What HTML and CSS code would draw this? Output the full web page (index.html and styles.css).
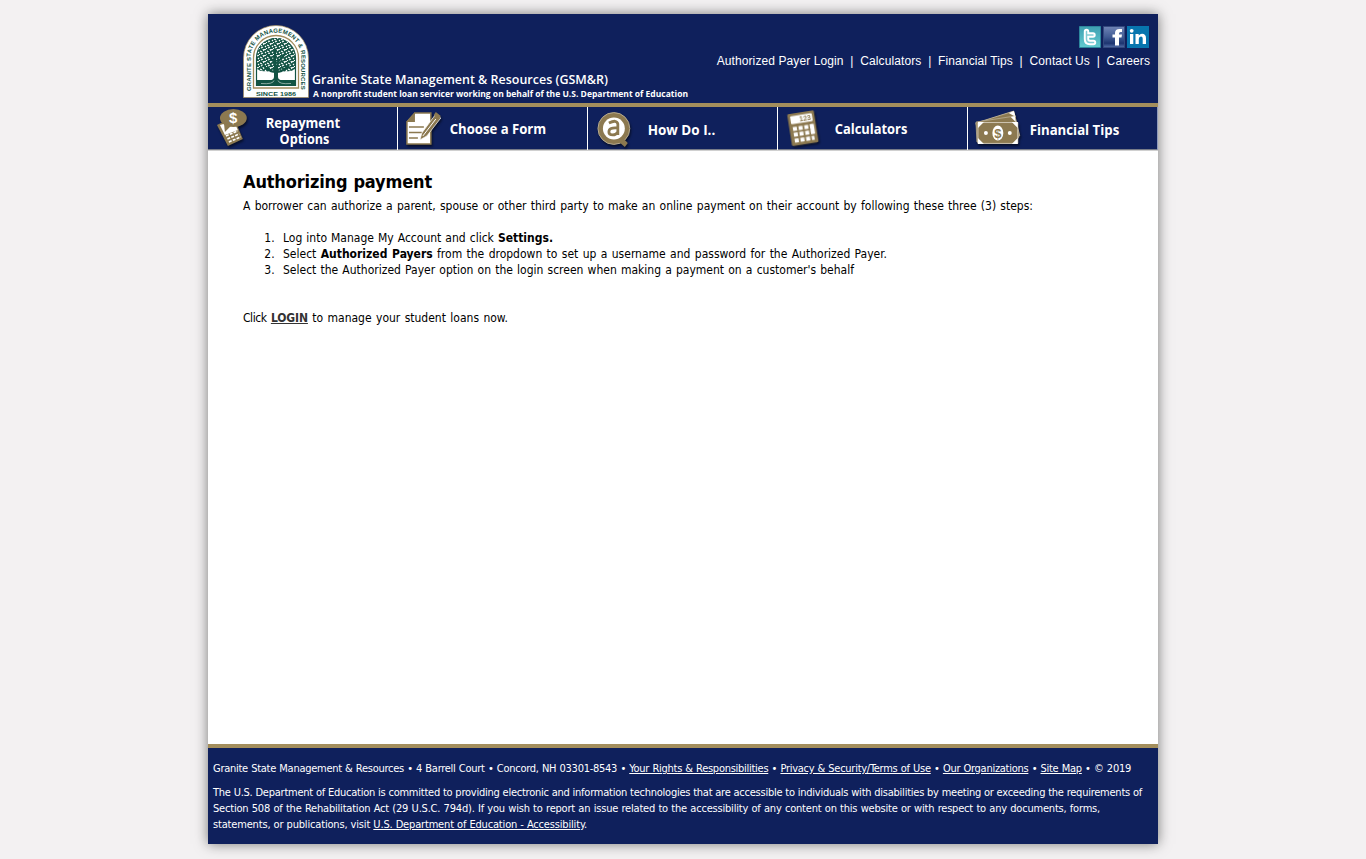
FILE: index.html
```html
<!DOCTYPE html>
<html lang="en">
<head>
<meta charset="utf-8">
<title>Authorizing payment</title>
<link rel="stylesheet" href="styles.css">
</head>
<body>
<div class="page">
  <header class="header">
    <svg class="logo" width="66" height="73" viewBox="0 0 66 73">
      <defs>
        <path id="arch" d="M7.600 66V33a25.400 25.400 0 0 1 50.800 0v33"/>
        <pattern id="leaves" width="7" height="6" patternUnits="userSpaceOnUse">
          <path d="M0 1l2-1M3 2l2 1M6 0l1 2M1 4l1-1M4 5l2-1M2.500 6V5" stroke="#fff" stroke-width="1.200"/>
        </pattern>
      </defs>
      <path d="M.5 72.500V33a32.500 32.500 0 0 1 65 0v39.500z" fill="#fff" stroke="#a28c5d" stroke-width=".7"/>
      <path d="M10.500 63V33a22.500 22.500 0 0 1 45 0v30z" fill="#fff" stroke="#a28c5d" stroke-width="1.300"/>
      <path d="M13.500 60.500V33a19.500 19.500 0 0 1 39 0v27.500z" fill="#fff" stroke="#125344" stroke-width="1.200"/>
      <path d="M14 44V32a19 19 0 0 1 38 0v12q-4 3-9 2-5 2-10 1-5 1-10-1-5 1-9-2z" fill="#125344"/>
      <path d="M14 44V32a19 19 0 0 1 38 0v12q-4 3-9 2-5 2-10 1-5 1-10-1-5 1-9-2z" fill="url(#leaves)"/>
      <path d="M14 55h38v5H14z" fill="#125344"/>
      <path d="M32 25v21M32 47q-7-1-12-7M34 47q7-1 12-7M32 38l-8-9M34 38l8-9" fill="none" stroke="#125344" stroke-width="2"/>
      <path d="M31 40h4v12q0 3 6 4H25q6-1 6-4z" fill="#125344"/>
      <path d="M18 58.500q12 1 13-3M48 58.500q-12 1-13-3" fill="none" stroke="#d8e3dc" stroke-width=".6"/>
      <text class="logo-text"><textPath href="#arch" textLength="144" lengthAdjust="spacing">GRANITE STATE MANAGEMENT &amp; RESOURCES</textPath></text>
      <text class="logo-since" x="13" y="71" textLength="40" lengthAdjust="spacingAndGlyphs">SINCE 1986</text>
    </svg>
    <svg class="brand" width="400" height="42" viewBox="0 0 400 42">
      <text class="brand-name" x="4" y="24" textLength="296" lengthAdjust="spacingAndGlyphs">Granite State Management &amp; Resources (GSM&amp;R)</text>
      <text class="brand-tag" x="5" y="37" textLength="375" lengthAdjust="spacingAndGlyphs">A nonprofit student loan servicer working on behalf of the U.S. Department of Education</text>
    </svg>
    <div class="tools">
      <div class="social">
        <svg width="22" height="22" viewBox="0 0 22 22"><defs><linearGradient id="tw" x2="0" y2="1"><stop stop-color="#3fa0b2"/><stop offset="1" stop-color="#62cbd0"/></linearGradient></defs><path fill="url(#tw)" stroke="#2d879d" d="M.5.5h21v21H.5z"/><path d="M7.500 5.500V13q0 3.500 3.500 3.500h3.500M7.500 9h6.500" fill="none" stroke="#fff" stroke-width="5.400" stroke-linecap="round" stroke-linejoin="round"/><path d="M7.500 5.500V13q0 3.500 3.500 3.500h3.500M7.500 9h6.500" fill="none" stroke="#83ccd5" stroke-width="1.500" stroke-linecap="round"/></svg>
        <svg width="22" height="22" viewBox="0 0 22 22"><defs><linearGradient id="fb" x2="0" y2="1"><stop stop-color="#6f84b5"/><stop offset=".5" stop-color="#405b94"/><stop offset=".8" stop-color="#1d3470"/><stop offset="1" stop-color="#5470a9"/></linearGradient></defs><path fill="url(#fb)" stroke="#34497e" d="M.5.5h21v21H.5z"/><path fill="#fff" d="M12 19.500v-8H9.500V8.500H12V7q0-4 4.500-4H19v3h-1.500Q16 6 16 7.500v1h3l-.5 3H16v8z"/></svg>
        <svg width="22" height="22" viewBox="0 0 22 22"><path fill="#0775ae" d="M0 0h22v22H0z"/><path fill="#fff" d="M3 8h3.300v10H3zM8.500 8h3.200v1.400Q13 7.700 15 7.700q4 0 4 4.500V18h-3.300v-5.500q0-2-1.700-2-2.200 0-2.200 2.500v5H8.500z"/><circle cx="4.700" cy="4.800" r="1.900" fill="#fff"/></svg>
      </div>
      <nav class="links"><a>Authorized Payer Login</a><i>|</i><a>Calculators</a><i>|</i><a>Financial Tips</a><i>|</i><a>Contact Us</a><i>|</i><a>Careers</a></nav>
    </div>
  </header>
  <nav class="menu">
    <svg class="item" viewBox="0 0 190 43">
      <g class="shade"><path d="M9 18l6-3 12-2 8 19-15 7z" fill="#8c7950"/><path d="M12 18l14-4 4 9-13 5z" fill="#fff"/><ellipse cx="25.500" cy="11" rx="13.500" ry="9" fill="#8c7950"/><path d="M16 16l1 9 7-7z" fill="#8c7950"/><path d="M18 29l12-5M19.500 32l12-5M21 35l12-5" stroke="#fff" stroke-width="1.600" stroke-dasharray="3 1.200"/></g>
      <text class="dollar" x="21" y="16">$</text>
      <text class="label" x="58" y="21" textLength="75" lengthAdjust="spacingAndGlyphs">Repayment</text>
      <text class="label" x="72" y="37" textLength="50" lengthAdjust="spacingAndGlyphs">Options</text>
    </svg>
    <svg class="item" viewBox="0 0 190 43">
      <g class="shade"><path d="M17 6h16v31H9V15z" fill="#fff" stroke="#8c7950" stroke-width="1.500"/><path d="M17 5v10H8z" fill="#8c7950"/><path d="M11 20h15M11 25.500h13M11 31h9" stroke="#8c7950" stroke-width="1.500"/><path d="M22 33l2-7L38 7l5 4-14 18z" fill="#8c7950" stroke="#fff" stroke-width=".7"/><path d="M25 29L38 12" stroke="#fff"/><path d="M38 5l5 4-2 3-5-4z" fill="#8c7950"/></g>
      <text class="label" x="52" y="27" textLength="97" lengthAdjust="spacingAndGlyphs">Choose a Form</text>
    </svg>
    <svg class="item" viewBox="0 0 190 43">
      <g class="shade"><circle cx="26" cy="21.500" r="16" fill="#8c7950" stroke="#b5aa90"/><path d="M29 33l8 7 3-4-5-5z" fill="#8c7950"/><circle cx="26" cy="21.500" r="11" fill="#fff"/></g>
      <path d="M21 16q8-4 9 1v11M30 21q-9-1-9 4 0 3 4 3 3 0 5-3" fill="none" stroke="#8c7950" stroke-width="2.800"/>
      <text class="label" x="60" y="28" textLength="68" lengthAdjust="spacingAndGlyphs">How Do I..</text>
    </svg>
    <svg class="item" viewBox="0 0 190 43">
      <g class="shade" transform="rotate(-9 25 21)"><rect x="11.500" y="5" width="27" height="32.500" rx="1.500" fill="#8c7950"/><rect x="14" y="7.500" width="22" height="8" rx="1" fill="#fff"/><path d="M15 20.500h20M15 26.500h20M15 32.500h20" stroke="#fff" stroke-width="4" stroke-dasharray="4 1.800"/><path d="M34.400 18.500v10" stroke="#fff" stroke-width="4"/><text x="23" y="14.500" class="digits">123</text></g>
      <text class="label" x="57" y="27" textLength="73" lengthAdjust="spacingAndGlyphs">Calculators</text>
    </svg>
    <svg class="item" viewBox="0 0 190 43">
      <g class="shade"><path d="M8 16l38-12 6 25-40 7z" fill="#8c7950" stroke="#b9ae94"/><path d="M41 6l5-2 2 6z" fill="#fff"/><path d="M8 15l39-6 4 22-42 4z" fill="#8c7950" stroke="#b9ae94" stroke-width=".8"/><path d="M43 10l4-1 1 6z" fill="#fff"/><path d="M10 15.500h40v21H10z" fill="#8c7950" stroke="#cfc6b2"/><path d="M10 15h6l-6 6zM50 15h-6l6 6zM10 37h6l-6-6zM50 37h-6l6-6z" fill="#fff"/><ellipse cx="30" cy="26" rx="5.500" ry="7.500" fill="#fff"/><circle cx="18" cy="26" r="2" fill="#fff"/><circle cx="42" cy="26" r="2" fill="#fff"/></g>
      <text class="dollar money" x="26.400" y="31">$</text>
      <text class="label" x="62" y="28" textLength="90" lengthAdjust="spacingAndGlyphs">Financial Tips</text>
    </svg>
  </nav>
  <main class="content">
    <h1><span class="line h">Authorizing payment</span></h1>
    <p><span class="line p1">A borrower can authorize a parent, spouse or other third party to make an online payment on their account by following these three (3) steps:</span></p>
    <ol>
      <li><span class="line l1">Log into Manage My Account and click <b>Settings.</b></span></li>
      <li><span class="line l2">Select <b>Authorized Payers</b> from the dropdown to set up a username and password for the Authorized Payer.</span></li>
      <li><span class="line l3">Select the Authorized Payer option on the login screen when making a payment on a customer's behalf</span></li>
    </ol>
    <p><span class="line p2"><span class="click">Click</span> <a>LOGIN</a> to manage your student loans now.</span></p>
  </main>
  <footer class="footer">
    <p><span class="line f1">Granite State Management &amp; Resources • 4 Barrell Court • Concord, NH 03301-8543 • <a>Your Rights &amp; Responsibilities</a> • <a>Privacy &amp; Security/Terms of Use</a> • <a>Our Organizations</a> • <a>Site Map</a> • © 2019</span></p>
    <p><span class="line f2">The U.S. Department of Education is committed to providing electronic and information technologies that are accessible to individuals with disabilities by meeting or exceeding the requirements of</span><br>
    <span class="line f3">Section 508 of the Rehabilitation Act (29 U.S.C. 794d). If you wish to report an issue related to the accessibility of any content on this website or with respect to any documents, forms,</span><br>
    <span class="line f4">statements, or publications, visit <a>U.S. Department of Education - Accessibility</a>.</span></p>
  </footer>
</div>
</body>
</html>
```
FILE: styles.css
```css
* { box-sizing: border-box; }
body { margin: 0; padding-top: 14px; background: #f3f1f2; font: 12px/16px "DejaVu Sans Condensed", "DejaVu Sans", sans-serif; font-stretch: condensed; color: #000; height: 859px; overflow: hidden; }
.page { width: 950px; height: 830px; margin: 0 auto; background: #fff; box-shadow: 0 0 12px #777; display: flex; flex-direction: column; }
.header { height: 93px; background: #0f205c; border-bottom: 4px solid #a38e5c; display: flex; padding-left: 35px; flex: none; }
.logo { margin-top: 11px; flex: none; }
.brand { margin: 46px 0 0 -1px; flex: none; overflow: visible; }
.logo-text { font: bold 6px "Liberation Sans", sans-serif; fill: #125344; }
.logo-since { font: bold 6px "Liberation Sans", sans-serif; fill: #125344; }
.brand-name { font: 600 13px "Open Sans", sans-serif; fill: #fff; }
.brand-tag { font: bold 9px "Open Sans", sans-serif; fill: #fff; }
.tools { flex: 1; padding: 12px 8px 0 0; display: flex; flex-direction: column; align-items: flex-end; }
.social { display: flex; gap: 2px; padding-right: 1px; height: 22px; }
.links { margin-top: 5px; display: flex; color: #fff; font: 12px/16px "Liberation Sans", Arial, sans-serif; white-space: nowrap; letter-spacing: .1px; }
.links i { font-style: normal; width: 16.700px; text-align: center; }
.menu { height: 43px; display: flex; background: #0f205c; border-bottom: 1px solid #777b88; box-shadow: 0 1px #d0d0d0; flex: none; }
.item { width: 190px; height: 43px; border-right: 1px solid #fff; flex: none; }
.item:last-child { border-right-color: #8f9abb; }
.label { font: bold 13.500px "Open Sans", sans-serif; fill: #fff; }
.dollar { font: bold 15px "Liberation Sans", sans-serif; fill: #fff; }
.money { font-size: 13px; fill: #8c7950; }
.digits { font: bold 7px "Liberation Sans", sans-serif; fill: #8c7950; }
.shade { filter: drop-shadow(1px 2px 1px #0008); }
.content { flex: 1; padding: 21px 35px 0; }
.line { display: inline-block; white-space: nowrap; text-align: justify; text-align-last: justify; }
h1 { margin: 0 0 5px; font-size: 18px; line-height: 22px; }
.content p { margin: 0; }
.content ol { margin: 16px 0 32px; padding-left: 35px; }
.content li { padding-left: 5px; }
.content a { font-weight: bold; color: #333; text-decoration: underline; letter-spacing: -.1px; }
.click { letter-spacing: -.45px; }
.h { width: 189px; letter-spacing: -.15px; }
.p1 { width: 790px; }
.l1 { width: 270px; }
.l2 { width: 604px; }
.l3 { width: 571px; }
.p2 { width: 265px; }
.footer { height: 100px; border-top: 4px solid #a38e5c; background: #0f205c; color: #fff; padding: 13px 5px 0; font-size: 11px; flex: none; }
.footer p { margin: 0 0 8px; }
.footer a { text-decoration: underline; }
.f1 { width: 918px; letter-spacing: -.27px; }
.f2 { width: 929px; letter-spacing: -.24px; }
.f3 { width: 887px; letter-spacing: -.2px; }
.f4 { width: 374px; letter-spacing: -.17px; }
```
